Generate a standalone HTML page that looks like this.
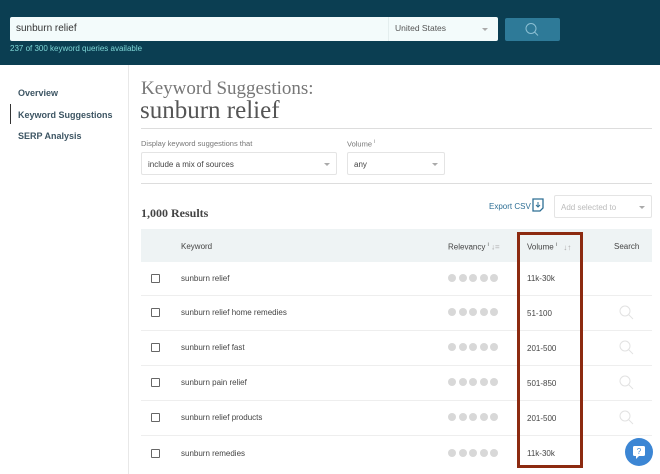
<!DOCTYPE html>
<html><head><style>
*{box-sizing:border-box;margin:0;padding:0}
body{width:660px;height:474px;overflow:hidden;background:#fff;font-family:"Liberation Sans",sans-serif;position:relative;color:#333}
.hdr{position:absolute;left:0;top:0;width:660px;height:65px;background:#0b3e52}
.inp{position:absolute;left:10px;top:17px;width:488px;height:24px;background:#f3fbfb;border-radius:2px}
.inp .t{position:absolute;left:6px;top:6px;font-size:10px;color:#333}
.inp .c{position:absolute;left:385px;top:6px;font-size:8.5px;color:#555}
.inp .sep{position:absolute;left:378px;top:0;width:1px;height:24px;background:#e4eeee}
.arr{position:absolute;width:0;height:0;border-left:3px solid transparent;border-right:3px solid transparent;border-top:3px solid #aaa}
.btn{position:absolute;left:505px;top:18px;width:55px;height:23px;background:#2e7a98;border-radius:2px}
.avail{position:absolute;left:10px;top:44px;font-size:8px;color:#7fd8d8}
.side{position:absolute;left:128px;top:65px;width:1px;height:409px;background:#e8e8e8}
.nav{position:absolute;left:18px;font-size:9px;font-weight:bold;color:#3d5563}
.bar{position:absolute;left:10px;top:104px;width:1px;height:20px;background:#333}
.h1{position:absolute;left:141px;top:78px;font-family:"Liberation Serif",serif;font-size:19px;color:#777}
.h2{position:absolute;left:140px;top:97px;font-family:"Liberation Serif",serif;font-size:25px;color:#555}
.hr{position:absolute;height:1px;background:#ddd}
.lbl{position:absolute;font-size:7.5px;color:#777}
.sel{position:absolute;height:23px;border:1px solid #e4e4e4;border-radius:2px;font-size:8px;color:#444;padding:7px 6px}
.res{position:absolute;left:141px;top:206px;font-family:"Liberation Serif",serif;font-weight:bold;font-size:12px;color:#444}
.thead{position:absolute;left:141px;top:229px;width:511px;height:33px;background:#eef3f4}
.th{position:absolute;font-size:8px;color:#444}
.row{position:absolute;left:141px;width:511px;height:1px;background:#eee}
.cb{position:absolute;left:151px;width:9px;height:9px;border:1px solid #666;border-radius:1px}
.kw{position:absolute;left:181px;font-size:8px;color:#444}
.dots{position:absolute;left:448px;display:flex;gap:2.5px}
.dots i{display:block;width:8px;height:8px;border-radius:50%;background:#d8d8d8}
.vol{position:absolute;left:527px;font-size:8px;color:#444}
.mag{position:absolute;left:619px}
.box{position:absolute;left:517px;top:232px;width:66px;height:236px;border:3px solid #8c2a10}
.help{position:absolute;left:625px;top:438px;width:28px;height:28px;border-radius:50%;background:#3c86d4}
</style></head><body>
<div class="hdr"></div>
<div class="inp"><span class="t">sunburn relief</span><span class="sep"></span><span class="c">United States</span><span class="arr" style="left:472px;top:11px"></span></div>
<div class="btn"><svg width="55" height="23"><circle cx="26" cy="10.5" r="5" fill="none" stroke="#8cc0d4" stroke-width="1"/><line x1="29.5" y1="14" x2="33" y2="17.5" stroke="#8cc0d4" stroke-width="1"/></svg></div>
<div class="avail">237 of 300 keyword queries available</div>
<div class="side"></div>
<div class="nav" style="top:88px">Overview</div>
<div class="bar"></div>
<div class="nav" style="top:110px">Keyword Suggestions</div>
<div class="nav" style="top:131px">SERP Analysis</div>
<div class="h1">Keyword Suggestions:</div>
<div class="h2">sunburn relief</div>
<div class="hr" style="left:141px;top:128px;width:511px"></div>
<div class="lbl" style="left:141px;top:139px">Display keyword suggestions that</div>
<div class="lbl" style="left:347px;top:139px">Volume <sup style="font-size:5px">i</sup></div>
<div class="sel" style="left:141px;top:152px;width:196px">include a mix of sources<span class="arr" style="left:182px;top:10px"></span></div>
<div class="sel" style="left:347px;top:152px;width:98px">any<span class="arr" style="left:84px;top:10px"></span></div>
<div class="hr" style="left:141px;top:183px;width:511px"></div>
<div class="lbl" style="left:489px;top:202px;color:#2e6f95;font-size:8px">Export CSV</div>
<svg style="position:absolute;left:532px;top:198px" width="12" height="14"><path d="M1 1h10v9l-3 3H1z" fill="none" stroke="#2e6f95" stroke-width="1.3"/><path d="M6 4v5M4 7l2 2 2-2" fill="none" stroke="#2e6f95"/></svg>
<div class="sel" style="left:554px;top:195px;width:98px;color:#bbb">Add selected to<span class="arr" style="left:84px;top:10px"></span></div>
<div class="res">1,000 Results</div>
<div class="thead"></div>
<div class="th" style="left:181px;top:242px">Keyword</div>
<div class="th" style="left:448px;top:242px">Relevancy <sup style="font-size:5px">i</sup> <span style="color:#aaa">↓=</span></div>
<div class="th" style="left:527px;top:242px">Volume <sup style="font-size:5px">i</sup> <span style="color:#aaa;margin-left:4px">↓↑</span></div>
<div class="th" style="left:614px;top:242px">Search</div>

<div class="cb" style="top:274px"></div><div class="kw" style="top:274px">sunburn relief</div><div class="dots" style="top:274px"><i></i><i></i><i></i><i></i><i></i></div><div class="vol" style="top:274px">11k-30k</div>
<div class="row" style="top:295px"></div>
<div class="cb" style="top:308px"></div><div class="kw" style="top:308px">sunburn relief home remedies</div><div class="dots" style="top:308px"><i></i><i></i><i></i><i></i><i></i></div><div class="vol" style="top:309px">51-100</div>
<div class="row" style="top:330px"></div>
<div class="cb" style="top:343px"></div><div class="kw" style="top:343px">sunburn relief fast</div><div class="dots" style="top:343px"><i></i><i></i><i></i><i></i><i></i></div><div class="vol" style="top:344px">201-500</div>
<div class="row" style="top:365px"></div>
<div class="cb" style="top:378px"></div><div class="kw" style="top:378px">sunburn pain relief</div><div class="dots" style="top:378px"><i></i><i></i><i></i><i></i><i></i></div><div class="vol" style="top:379px">501-850</div>
<div class="row" style="top:400px"></div>
<div class="cb" style="top:413px"></div><div class="kw" style="top:413px">sunburn relief products</div><div class="dots" style="top:413px"><i></i><i></i><i></i><i></i><i></i></div><div class="vol" style="top:414px">201-500</div>
<div class="row" style="top:435px"></div>
<div class="cb" style="top:449px"></div><div class="kw" style="top:449px">sunburn remedies</div><div class="dots" style="top:449px"><i></i><i></i><i></i><i></i><i></i></div><div class="vol" style="top:449px">11k-30k</div>

<svg class="mag" style="top:305px" width="16" height="16"><circle cx="6" cy="6" r="5" fill="none" stroke="#e2e2e2"/><line x1="9.5" y1="9.5" x2="14" y2="14" stroke="#e2e2e2"/></svg>
<svg class="mag" style="top:340px" width="16" height="16"><circle cx="6" cy="6" r="5" fill="none" stroke="#e2e2e2"/><line x1="9.5" y1="9.5" x2="14" y2="14" stroke="#e2e2e2"/></svg>
<svg class="mag" style="top:375px" width="16" height="16"><circle cx="6" cy="6" r="5" fill="none" stroke="#e2e2e2"/><line x1="9.5" y1="9.5" x2="14" y2="14" stroke="#e2e2e2"/></svg>
<svg class="mag" style="top:410px" width="16" height="16"><circle cx="6" cy="6" r="5" fill="none" stroke="#e2e2e2"/><line x1="9.5" y1="9.5" x2="14" y2="14" stroke="#e2e2e2"/></svg>
<div class="box"></div>
<div class="help"><svg width="28" height="28"><rect x="8" y="8" width="12" height="10" rx="1.5" fill="#fff"/><path d="M11 18l0 3 3-3z" fill="#fff"/><text x="14" y="16" font-size="8" text-anchor="middle" fill="#3c86d4" font-family="Liberation Sans">?</text></svg></div>
</body></html>
